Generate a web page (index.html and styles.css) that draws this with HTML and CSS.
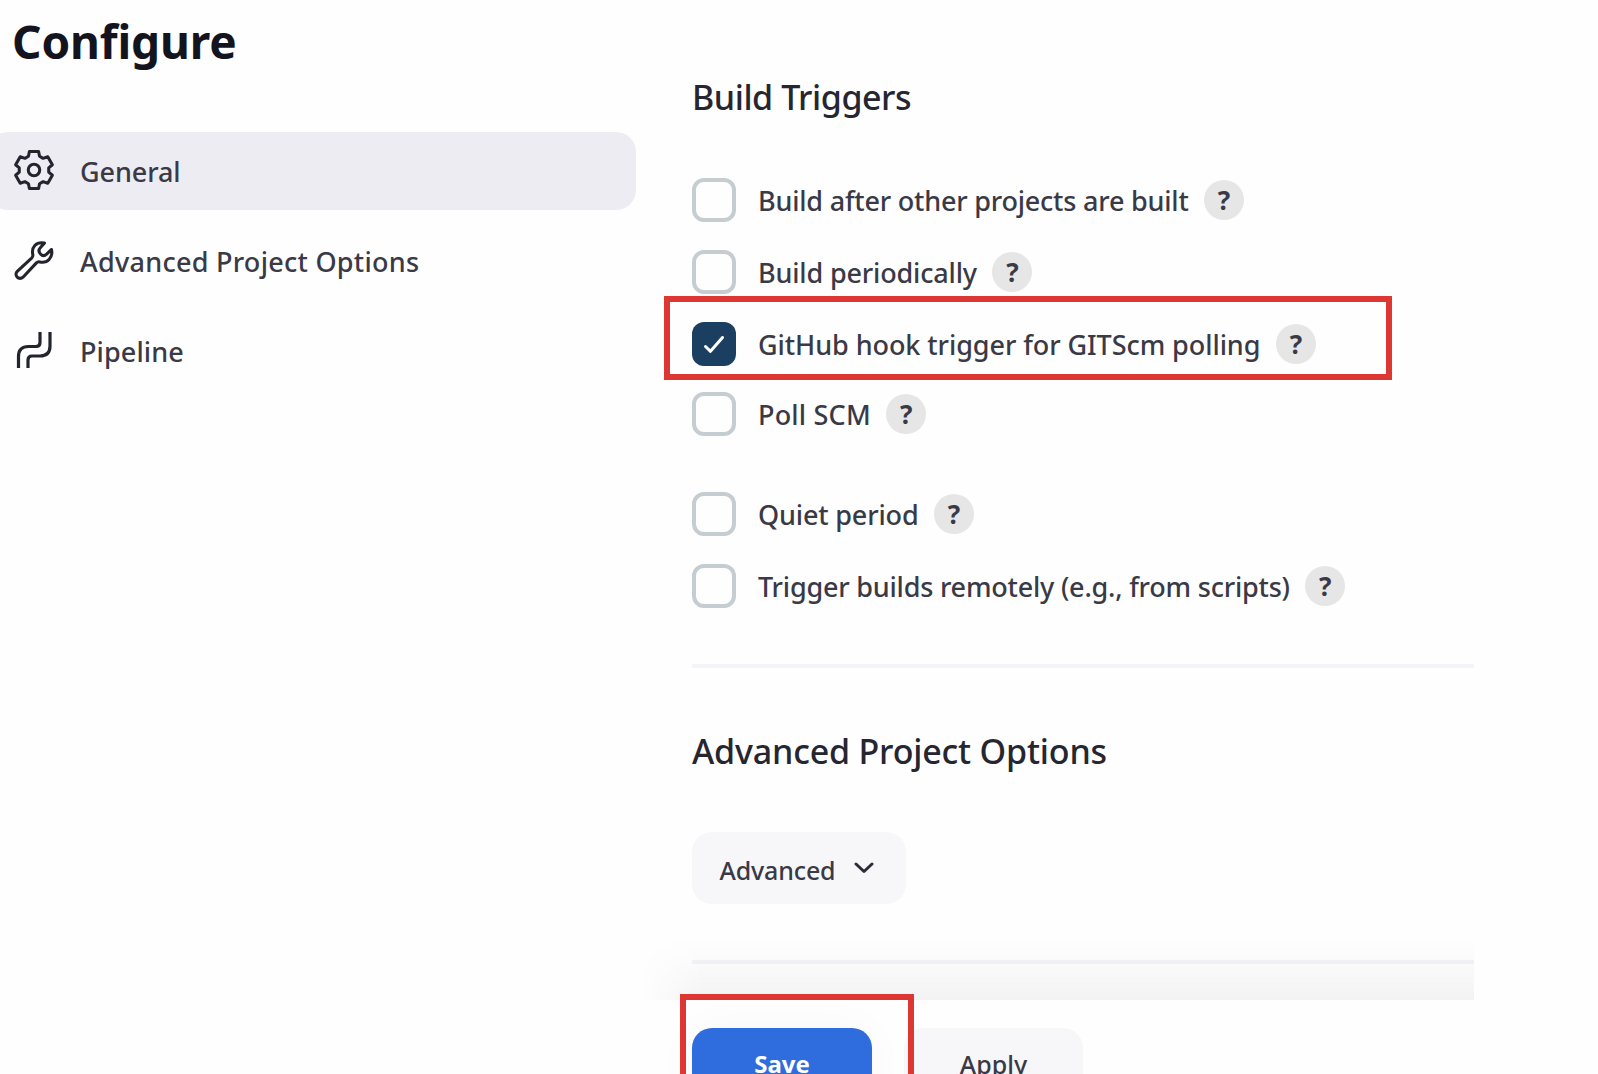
FILE: index.html
```html
<!DOCTYPE html>
<html lang="en">
<head>
<meta charset="utf-8">
<title>Configure</title>
<link rel="stylesheet" href="styles.css">
</head>
<body>
<div class="page">
  <aside class="side">
    <h1>Configure</h1>
    <nav class="tasks">
      <a class="task active">
        <svg class="icon" viewBox="-1 -1 46 46"><path d="M17.200 2.600H26.800L27.800 7.600L31.500 9.800L36.400 8.100L41.200 16.500L37.400 19.800V24.200L41.200 27.500L36.400 35.900L31.500 34.200L27.800 36.400L26.800 41.400H17.200L16.200 36.400L12.500 34.200L7.600 35.900L2.800 27.500L6.600 24.200V19.800L2.800 16.500L7.600 8.100L12.500 9.800L16.200 7.600Z"/><circle cx="22" cy="22" r="6"/></svg>
        <span class="t-general">General</span>
      </a>
      <a class="task">
        <svg class="icon" viewBox="-1 -1 46 46"><path d="M33 4.300C24 2.500 19 9 20.800 16.500C21 18 20.500 19 19.500 20L4.500 33.800A4 4 0 0 0 10.500 40L24.500 25C25.500 24 26.500 23.700 28 24C36 26 42 19.500 40.300 11L35.500 15.600C33 18 30.500 17.500 29 16C27 14 26.500 11.500 28.800 9Z"/></svg>
        <span class="t-options">Advanced Project Options</span>
      </a>
      <a class="task">
        <svg class="icon" viewBox="0 0 44 44"><path class="pipe" d="M6.500 40V28.500Q6.500 18.500 16.500 18.500H24Q28 18.500 28 14.500V4M16 40V32Q16 28 20 28H28Q38 28 38 18V4"/></svg>
        <span class="t-pipeline">Pipeline</span>
      </a>
    </nav>
  </aside>
  <main class="main">
    <section class="triggers">
      <h2 class="h-triggers">Build Triggers</h2>
      <div class="row r1"><i class="box"></i><label>Build after other projects are built</label><b class="help">?</b></div>
      <div class="row r2"><i class="box"></i><label>Build periodically</label><b class="help">?</b></div>
      <div class="row r3"><i class="box checked"><svg viewBox="0 0 44 44"><path d="M13.500 24.500L18.500 29.300L30.500 15.500"/></svg></i><label>GitHub hook trigger for GITScm polling</label><b class="help">?</b></div>
      <div class="row r4"><i class="box"></i><label>Poll SCM</label><b class="help">?</b></div>
      <div class="row r5"><i class="box"></i><label>Quiet period</label><b class="help">?</b></div>
      <div class="row r6"><i class="box"></i><label>Trigger builds remotely (e.g., from scripts)</label><b class="help">?</b></div>
    </section>
    <section class="advanced">
      <h2 class="h-options">Advanced Project Options</h2>
      <button class="btn more">Advanced<svg viewBox="0 0 20 12"><path d="M2 2L10 9.500L18 2"/></svg></button>
    </section>
    <footer class="bar">
      <div class="shade"></div>
      <button class="btn save">Save</button>
      <button class="btn apply">Apply</button>
    </footer>
  </main>
  <div class="mark mark-hook"></div>
  <div class="mark mark-save"></div>
</div>
</body>
</html>
```
FILE: styles.css
```css
* { box-sizing: border-box; }
body {
  margin: 0;
  background: #fefefe;
  color: #3a3a46;
  font: 500 27px/40px "Noto Sans", "Open Sans", sans-serif;
}
.page {
  position: relative;
  display: flex;
  width: 1598px;
  height: 1074px;
  overflow: hidden;
}

/* Side navigation */
.side { width: 692px; flex: none; }
h1 {
  margin: 0;
  padding: 10px 0 0 12px;
  height: 132px;
  font-size: 46px;
  line-height: 62px;
  font-weight: 700;
  letter-spacing: -0.15px;
  color: #14141f;
}
.tasks {
  display: flex;
  flex-direction: column;
  gap: 12px;
  width: 648px;
  margin-left: -12px;
}
.task {
  display: flex;
  align-items: center;
  gap: 24px;
  height: 78px;
  padding-left: 24px;
  border-radius: 20px;
}
.task.active { background: #edecf3; }
.task span { padding-top: 2px; }
.icon {
  width: 44px;
  height: 44px;
  margin-top: -2px;
  fill: none;
  stroke: #24242f;
  stroke-width: 3.2;
  stroke-linecap: round;
  stroke-linejoin: round;
}
.icon .pipe { stroke-linecap: butt; }
.t-general { letter-spacing: -0.1px; }
.t-options { letter-spacing: 0.27px; }
.t-pipeline { letter-spacing: 0.1px; }

/* Form */
.main { width: 782px; }
h2 {
  margin: 0;
  font-size: 34px;
  line-height: 48px;
  font-weight: 500;
  color: #262631;
}
.h-triggers { letter-spacing: -0.45px; }
.h-options { letter-spacing: -0.18px; }
.triggers {
  height: 668px;
  padding-top: 73px;
  border-bottom: 4px solid #f3f3f8;
}
.row {
  display: flex;
  align-items: center;
  height: 44px;
  margin-bottom: 28px;
}
.r1 { margin-top: 57px; letter-spacing: -0.21px; }
.r2 { letter-spacing: -0.17px; }
.r3 { margin-bottom: 26px; letter-spacing: -0.07px; }
.r4 { margin-bottom: 56px; letter-spacing: 0.2px; }
.r5 { letter-spacing: -0.16px; }
.r6 { letter-spacing: -0.21px; }
.box {
  width: 44px;
  height: 44px;
  border: 4px solid #c5cdd1;
  border-radius: 12px;
}
.box.checked { border: 0; background: #1b3f60; }
.box svg {
  display: block;
  fill: none;
  stroke: #fff;
  stroke-width: 3;
  stroke-linecap: round;
  stroke-linejoin: round;
}
.row label { margin: 0 15.4px 0 22px; padding-top: 1px; }
.help {
  width: 40px;
  height: 40px;
  border-radius: 50%;
  background: #e6e6e6;
  font-size: 26px;
  font-weight: 700;
  line-height: 40px;
  text-align: center;
}
.advanced {
  height: 296px;
  padding-top: 59px;
  border-bottom: 4px solid #f3f3f8;
}
.btn {
  display: flex;
  align-items: center;
  justify-content: center;
  height: 72px;
  padding: 0;
  border: 0;
  border-radius: 20px;
  background: #f7f7fa;
  color: inherit;
  font: 500 25px/36px "Noto Sans", "Open Sans", sans-serif;
}
.more {
  gap: 19px;
  width: 214px;
  margin-top: 57px;
  padding: 3px 4px 0 0;
  letter-spacing: -0.15px;
}
.more svg {
  width: 20px;
  height: 12px;
  margin-top: -4px;
  fill: none;
  stroke: #2c2c37;
  stroke-width: 3;
  stroke-linecap: round;
  stroke-linejoin: round;
}

/* Sticky button bar */
.bar {
  position: relative;
  display: flex;
  gap: 32px;
  padding-top: 64px;
}
.shade {
  position: absolute;
  left: -52px;
  right: 0;
  top: -28px;
  height: 64px;
  background: linear-gradient(to bottom, transparent, rgba(0, 0, 0, 0.01) 35%, rgba(0, 0, 0, 0.044));
  -webkit-mask-image: linear-gradient(to right, transparent, #000 64px);
  mask-image: linear-gradient(to right, transparent, #000 64px);
}
.save {
  width: 180px;
  background: #2f6cdd;
  color: #fff;
  font-weight: 700;
  font-size: 24px;
  box-shadow: 0 0 44px rgba(0, 0, 0, 0.03);
}
.apply { width: 179px; }

/* Red annotations */
.mark { position: absolute; border: 6px solid #dc3732; }
.mark-hook { left: 664px; top: 296px; width: 728px; height: 84px; }
.mark-save { left: 680px; top: 994px; width: 234px; height: 100px; }
```
